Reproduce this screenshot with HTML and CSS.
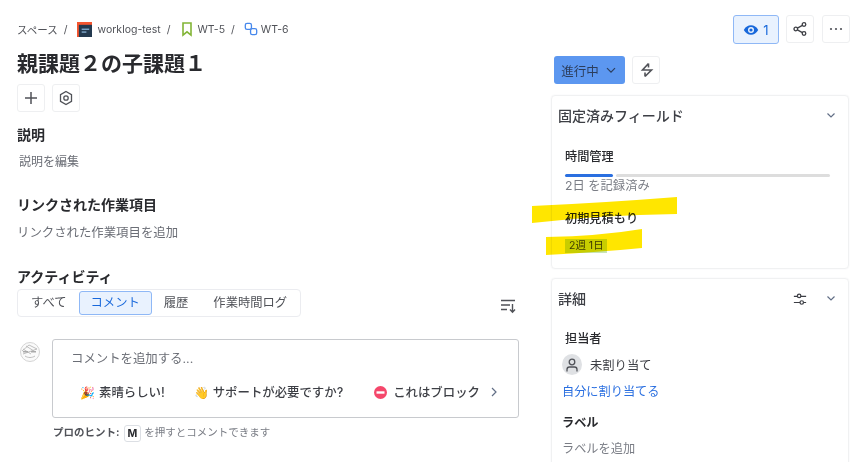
FILE: index.html
```html
<!DOCTYPE html>
<html lang="ja">
<head>
<meta charset="utf-8">
<title>親課題2の子課題1</title>
<link rel="stylesheet" href="styles.css">
</head>
<body>
<div class="page">
  <main class="left">
    <nav class="crumbs">
      <span>スペース</span><span class="sep">/</span>
      <svg class="proj" width="15" height="15" viewBox="0 0 16 16"><rect width="16" height="16" fill="#f4552f"/><rect x="2" y="3" width="14" height="13" fill="#23394f"/><rect x="5" y="7" width="8" height="1.5" fill="#7fa6c9"/><rect x="5" y="10" width="5" height="1.5" fill="#7fa6c9"/></svg>
      <span>worklog-test</span><span class="sep">/</span>
      <svg class="story" width="16" height="16" viewBox="0 0 16 16"><path d="M4 2h8v12L8 10.800 4 14z" fill="none" stroke="#82b536" stroke-width="1.600"/></svg>
      <span>WT-5</span><span class="sep">/</span>
      <svg class="sub" width="14" height="14" viewBox="0 0 16 16"><rect x="1.500" y="1.500" width="7" height="7" rx="2" fill="none" stroke="#4688ec" stroke-width="1.500"/><rect x="7.500" y="7.500" width="7" height="7" rx="2" fill="none" stroke="#4688ec" stroke-width="1.500"/></svg>
      <span>WT-6</span>
    </nav>
    <h1 class="title">親課題２の子課題１</h1>
    <div class="tools">
      <button class="sq"><svg width="16" height="16" viewBox="0 0 16 16"><path d="M8 2v12M2 8h12" stroke="#505258" stroke-width="1.500" fill="none"/></svg></button>
      <button class="sq"><svg width="16" height="16" viewBox="0 0 16 16"><path d="M8 1.500l5.500 3.200v6.600L8 14.500l-5.500-3.200V4.700z" fill="none" stroke="#505258" stroke-width="1.300"/><circle cx="8" cy="8" r="2.200" fill="none" stroke="#505258" stroke-width="1.300"/></svg></button>
    </div>
    <h2 class="h-desc">説明</h2>
    <p class="ph desc">説明を編集</p>
    <h2 class="h-link">リンクされた作業項目</h2>
    <p class="ph link">リンクされた作業項目を追加</p>
    <h2 class="h-act">アクティビティ</h2>
    <div class="act-row">
      <div class="tabs">
        <span class="tab">すべて</span>
        <span class="tab active">コメント</span>
        <span class="tab">履歴</span>
        <span class="tab worklog">作業時間ログ</span>
      </div>
      <svg class="sort" width="16" height="16" viewBox="0 0 16 16"><path d="M1 2.500h14M1 7h9M1 11.500h6M12.500 6v8M10 11.500l2.500 2.700 2.500-2.700" fill="none" stroke="#505258" stroke-width="1.400"/></svg>
    </div>
    <div class="comment">
      <svg class="me" width="20" height="20" viewBox="0 0 20 20"><circle cx="10" cy="10" r="9.500" fill="#fafafa" stroke="#d4d4d4"/><path d="M2 9l7-6 8 4M3 12l14-5M5 14c3 2 7 2 10 0M6 4l8 5M3 7l8 5" fill="none" stroke="#b8b8b8" stroke-width=".9"/><rect x="3" y="9" width="5" height="1.500" fill="#aaa"/><rect x="11" y="9" width="5" height="1.500" fill="#aaa"/></svg>
      <div class="box">
        <div class="placeholder">コメントを追加する...</div>
        <div class="hints">
          <span class="hint hint-a"><span class="emo">🎉</span>素晴らしい!</span>
          <span class="hint hint-b"><span class="emo">👋</span>サポートが必要ですか?</span>
          <span class="hint hint-c"><svg width="13" height="13" viewBox="0 0 13 13"><circle cx="6.500" cy="6.500" r="6.500" fill="#f5476b"/><rect x="2.500" y="5.300" width="8" height="2.400" fill="#fff"/></svg>これはブロック</span>
          <svg class="next" width="8" height="10" viewBox="0 0 8 10"><path d="M2 1l4 4-4 4" fill="none" stroke="#626f86" stroke-width="1.200"/></svg>
        </div>
      </div>
    </div>
    <p class="tip"><b>プロのヒント:</b><kbd>M</kbd>を押すとコメントできます</p>
  </main>
  <aside class="right">
    <div class="top">
      <button class="watch"><svg width="16" height="16" viewBox="0 0 16 16"><path d="M.8 8C2.500 4.800 5 3.300 8 3.300s5.500 1.500 7.200 4.700C13.500 11.200 11 12.700 8 12.700S2.500 11.200.8 8z" fill="#1868db"/><circle cx="8" cy="8" r="3" fill="#e9f2fe"/><circle cx="8" cy="8" r="1.600" fill="#1868db"/></svg>1</button>
      <button class="sq"><svg width="14" height="14" viewBox="0 0 14 14"><circle cx="2.800" cy="7" r="1.800" fill="none" stroke="#3d3f45" stroke-width="1.300"/><circle cx="11" cy="2.500" r="1.800" fill="none" stroke="#3d3f45" stroke-width="1.300"/><circle cx="11" cy="11.500" r="1.800" fill="none" stroke="#3d3f45" stroke-width="1.300"/><path d="M4.400 6.100l5-2.700M4.400 7.900l5 2.700" stroke="#3d3f45" stroke-width="1.300"/></svg></button>
      <button class="sq more"><svg width="14" height="14" viewBox="0 0 14 14"><circle cx="2" cy="7" r="1.100" fill="#505258"/><circle cx="7" cy="7" r="1.100" fill="#505258"/><circle cx="12" cy="7" r="1.100" fill="#505258"/></svg></button>
    </div>
    <div class="status-row">
      <button class="status">進行中<svg width="10" height="7" viewBox="0 0 10 7"><path d="M1 1.200l4 4 4-4" fill="none" stroke="#2c3e5d" stroke-width="1.200"/></svg></button>
      <button class="sq"><svg width="16" height="16" viewBox="0 0 16 16"><path d="M10.500 1.500L4.500 8h9L7 14.500M10.500 1.500V5.500M7 14.500V10.500" fill="none" stroke="#505258" stroke-width="1.600"/></svg></button>
    </div>
    <section class="card pinned">
      <header class="card-head"><h3>固定済みフィールド</h3><svg class="chev" width="10" height="7" viewBox="0 0 10 7"><path d="M1.500 1.500L5 5l3.500-3.500" fill="none" stroke="#626f86" stroke-width="1.200"/></svg></header>
      <div class="field-name time">時間管理</div>
      <div class="bar"><span class="bar-done"></span><span class="bar-rest"></span></div>
      <div class="logged">2日 を記録済み</div>
      <div class="field-name est">初期見積もり</div>
      <span class="tag">2週 1日</span>
    </section>
    <section class="card details">
      <header class="card-head"><h3>詳細</h3><svg class="cfg" width="14" height="14" viewBox="0 0 16 16"><path d="M1 5h14M1 12h14" stroke="#3d3f45" stroke-width="1.400" fill="none"/><circle cx="7" cy="4.500" r="2" fill="#fff" stroke="#3d3f45" stroke-width="1.400"/><circle cx="10" cy="12" r="2" fill="#fff" stroke="#3d3f45" stroke-width="1.400"/></svg><svg class="chev" width="10" height="7" viewBox="0 0 10 7"><path d="M1.500 1.500L5 5l3.500-3.500" fill="none" stroke="#626f86" stroke-width="1.200"/></svg></header>
      <div class="field-name assignee">担当者</div>
      <div class="person"><span class="avatar"><svg width="14" height="14" viewBox="0 0 14 14"><circle cx="7" cy="4" r="2.800" fill="none" stroke="#505258" stroke-width="1.300"/><path d="M2 13.500v-2c0-1.500 1-2.500 2.500-2.500h5c1.500 0 2.500 1 2.500 2.500v2" fill="none" stroke="#505258" stroke-width="1.300"/></svg></span>未割り当て</div>
      <a class="assign">自分に割り当てる</a>
      <div class="field-name label">ラベル</div>
      <div class="add-label">ラベルを追加</div>
    </section>
  </aside>
</div>
<svg class="marker" width="862" height="462" viewBox="0 0 862 462"><path d="M532 206Q600 203 677 197L677 214Q600 215 532 223z" fill="#ffe600"/><path d="M546 237Q600 236 642 229L642 248Q600 252 546 255z" fill="#ffe600"/></svg>
</body>
</html>
```
FILE: styles.css
```css
* { box-sizing: border-box; }
html, body { margin: 0; height: 462px; overflow: hidden; background: #fff; }
body { font-family: Inter, "Noto Sans CJK JP", sans-serif; color: #292a2e; position: relative; }
h1, h2, h3, p { margin: 0; }
button { font: inherit; padding: 0; cursor: pointer; }
.page { display: flex; height: 462px; }
.left { width: 551px; padding: 20px 0 0 17px; flex: none; }
.right { flex: 1; padding: 15px 12px 0 0; }
.crumbs { display: flex; align-items: center; height: 18px; font-size: 10.500px; color: #505258; white-space: nowrap; }
.sep { margin: 0 8px 0 6px; }
.proj { margin: 0 6px 0 1px; }
.story { margin: 0 2px 0 1px; }
.sub { margin: 0 3px 0 1px; }
.title { font-size: 21px; line-height: 28px; font-weight: 700; margin-top: 12px; }
.tools { display: flex; gap: 7px; margin-top: 6px; }
.sq { width: 28px; height: 28px; border: 1px solid #eeeff1; border-radius: 3px; background: #fff; display: flex; align-items: center; justify-content: center; }
h2 { font-size: 14px; line-height: 20px; font-weight: 700; color: #292a2e; }
.h-desc { margin-top: 13px; }
.h-link { margin-top: 23px; }
.h-act { margin-top: 24px; }
.ph { line-height: 20px; color: #6b6e76; }
.desc { font-size: 12px; margin: 7px 0 0 2px; }
.link { font-size: 12.400px; margin-top: 8px; }
.act-row { display: flex; align-items: flex-start; width: 499px; justify-content: space-between; margin-top: 2px; }
.tabs { display: flex; height: 28px; align-items: center; padding: 0 1px; border: 1px solid #ebecf0; border-radius: 4px; font-size: 12.300px; color: #505258; width: 284px; }
.tab { padding: 0 11px; line-height: 22px; white-space: nowrap; border: 1px solid transparent; }
.tab.active { background: #e9f2fe; border-color: #8fb8f6; border-radius: 3px; color: #1868db; }
.worklog { margin-left: 1px; padding-right: 0; }
.sort { margin-top: 9px; }
.comment { display: flex; margin-top: 22px; }
.me { margin: 3px 12px 0 3px; }
.box { width: 467px; height: 79px; border: 1px solid #c8cace; border-radius: 3px; padding: 9px 0 0 18px; }
.placeholder { font-size: 12.400px; line-height: 20px; color: #6b6e76; }
.hints { display: flex; align-items: center; font-size: 12.400px; font-weight: 500; color: #3d3f45; margin-top: 13px; height: 20px; }
.hint { display: inline-flex; align-items: center; white-space: nowrap; }
.hint-a { margin-left: 9px; }
.hint-b { margin-left: 29px; }
.hint-c { margin-left: 31px; }
.emo { font-size: 12px; margin-right: 4px; }
.hint-c svg { margin-right: 6px; }
.next { margin-left: 10px; }
.tip { font-size: 10.500px; line-height: 18px; color: #7a7d85; margin: 6px 0 0 36px; display: flex; align-items: center; }
.tip b { color: #505258; font-weight: 700; }
kbd { font: 700 10.500px Inter, sans-serif; color: #292a2e; border: 1px solid #dcdfe4; border-radius: 3px; padding: 0 3px; margin: 0 3px 0 4px; line-height: 15px; }
.top { display: flex; justify-content: flex-end; gap: 7px; }
.more { margin-left: 1px; }
.watch { width: 46px; height: 29px; background: #e9f2fe; border: 1px solid #8fb8f6; border-radius: 3px; display: flex; align-items: center; justify-content: center; gap: 4px; font-size: 13px; color: #1868db; }
.status-row { display: flex; gap: 7px; margin: 12px 0 0 3px; }
.status { width: 71px; height: 28px; background: #5c97f0; border: 0; border-radius: 3px; font-size: 12.500px; color: #2c3e5d; display: flex; align-items: center; justify-content: center; gap: 7px; padding-right: 2px; }
.card { border: 1px solid #f0f1f2; border-radius: 4px; box-shadow: 0 0 2px rgba(9,30,66,.06); width: 298px; padding: 0 6px; }
.pinned { margin-top: 11px; height: 174px; }
.details { margin-top: 9px; height: 200px; }
.card-head { display: flex; align-items: center; height: 39px; }
.card-head h3 { font-size: 14px; font-weight: 500; color: #3d3f45; flex: 1; line-height: 18px; }
.chev { margin-right: 6px; }
.cfg { margin-right: 19px; }
.field-name { font-size: 12.200px; line-height: 16px; font-weight: 500; color: #292a2e; padding-left: 7px; }
.time { margin-top: 14px; }
.bar { display: flex; gap: 3px; margin: 9px 12px 0 7px; height: 3px; }
.bar-done { width: 48px; background: #2a6fe0; border-radius: 2px; }
.bar-rest { flex: 1; background: #dddddd; border-radius: 2px; }
.logged { font-size: 12.300px; line-height: 18px; color: #7a7d85; padding-left: 7px; }
.est { margin-top: 16px; }
.tag { display: block; width: 42px; margin: 12px 0 0 7px; font-size: 10.500px; line-height: 14px; padding: 0 0 0 4px; background: #c8e4b8; color: #3d3f45; white-space: nowrap; }
.assignee { margin-top: 13px; }
.person { display: flex; align-items: center; gap: 8px; font-size: 12.300px; color: #3d3f45; margin: 7px 0 0 4px; }
.avatar { width: 20px; height: 21px; border-radius: 50%; background: #dfe1e4; display: flex; align-items: center; justify-content: center; }
.assign { display: block; font-size: 12.200px; line-height: 18px; color: #2a6fe0; margin: 8px 0 0 4px; }
.label { margin-top: 14px; padding-left: 4px; font-weight: 700; }
.add-label { font-size: 12.200px; line-height: 18px; color: #7a7d85; margin: 9px 0 0 4px; }
.marker { position: absolute; left: 0; top: 0; mix-blend-mode: multiply; pointer-events: none; }
```
